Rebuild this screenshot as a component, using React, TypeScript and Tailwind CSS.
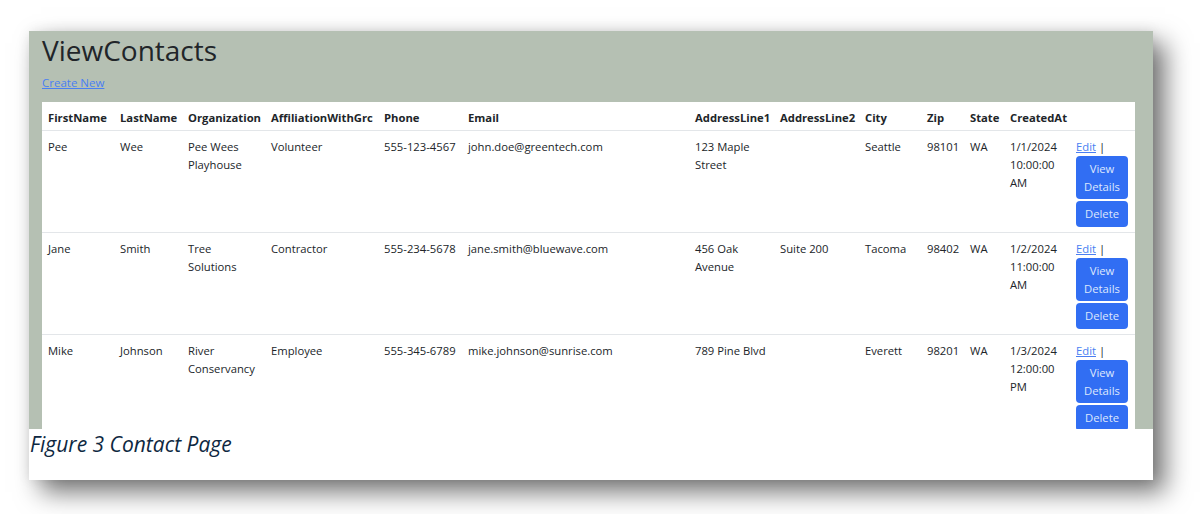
import React from 'react'

type Contact = {
  first: string
  last: string
  org: string
  affiliation: string
  phone: string
  email: string
  addr1: string
  addr2: string
  city: string
  zip: string
  state: string
  created: string
}

const contacts: Contact[] = [
  {
    first: 'Pee', last: 'Wee', org: 'Pee Wees Playhouse', affiliation: 'Volunteer',
    phone: '555-123-4567', email: 'john.doe@greentech.com', addr1: '123 Maple Street', addr2: '',
    city: 'Seattle', zip: '98101', state: 'WA', created: '1/1/2024 10:00:00 AM',
  },
  {
    first: 'Jane', last: 'Smith', org: 'Tree Solutions', affiliation: 'Contractor',
    phone: '555-234-5678', email: 'jane.smith@bluewave.com', addr1: '456 Oak Avenue', addr2: 'Suite 200',
    city: 'Tacoma', zip: '98402', state: 'WA', created: '1/2/2024 11:00:00 AM',
  },
  {
    first: 'Mike', last: 'Johnson', org: 'River Conservancy', affiliation: 'Employee',
    phone: '555-345-6789', email: 'mike.johnson@sunrise.com', addr1: '789 Pine Blvd', addr2: '',
    city: 'Everett', zip: '98201', state: 'WA', created: '1/3/2024 12:00:00 PM',
  },
]

const headers = [
  'FirstName', 'LastName', 'Organization', 'AffiliationWithGrc', 'Phone', 'Email',
  'AddressLine1', 'AddressLine2', 'City', 'Zip', 'State', 'CreatedAt', '',
]

const widths = [72, 68, 83, 113, 84, 227, 85, 85, 62, 43, 40, 66, 65]

export default function App() {
  return (
    <div className="min-h-screen bg-white pl-[29px] pt-[31px]" style={{ fontFamily: '"Open Sans", "Noto Sans", sans-serif' }}>
      <div className="w-[1124px] h-[449px] bg-white shadow-[12px_12px_24px_rgba(0,0,0,0.55),0_0_12px_rgba(0,0,0,0.08)]">
        <div className="h-[398px] overflow-hidden bg-[#b5c0b3] px-[13px] text-[#212529]">
          <h1 className="pt-[2px] text-[28px] leading-[34px] font-normal text-[#212529]">ViewContacts</h1>
          <a href="#" className="mt-[7px] inline-block text-[11.5px] leading-[18px] text-[#4a7ff2] underline">
            Create New
          </a>
          <table className="mt-[9px] w-[1093px] table-fixed border-collapse bg-white text-left text-[11.25px] leading-[18px]">
            <colgroup>
              {widths.map((w, i) => (
                <col key={i} style={{ width: w }} />
              ))}
            </colgroup>
            <thead>
              <tr className="border-b border-[#e3e6e9]">
                {headers.map((h, i) => (
                  <th key={i} className="overflow-hidden whitespace-nowrap px-[6px] pt-[7px] pb-[3px] font-bold">
                    {h}
                  </th>
                ))}
              </tr>
            </thead>
            <tbody>
              {contacts.map((c) => (
                <tr key={c.email} className="border-b border-[#e3e6e9] align-top">
                  <td className="px-[6px] pt-[7px] pb-[5px]">{c.first}</td>
                  <td className="px-[6px] pt-[7px]">{c.last}</td>
                  <td className="px-[6px] pt-[7px]">{c.org}</td>
                  <td className="px-[6px] pt-[7px]">{c.affiliation}</td>
                  <td className="px-[6px] pt-[7px]">{c.phone}</td>
                  <td className="px-[6px] pt-[7px]">{c.email}</td>
                  <td className="px-[6px] pt-[7px]">{c.addr1}</td>
                  <td className="px-[6px] pt-[7px]">{c.addr2}</td>
                  <td className="px-[6px] pt-[7px]">{c.city}</td>
                  <td className="px-[6px] pt-[7px]">{c.zip}</td>
                  <td className="px-[6px] pt-[7px]">{c.state}</td>
                  <td className="px-[6px] pt-[7px]">{c.created}</td>
                  <td className="px-[6px] pt-[7px] pb-[5px]">
                    <div>
                      <a href="#" className="text-[#4a7ff2] underline">Edit</a> |
                    </div>
                    <div className="flex flex-col gap-[2px]">
                      <button className="w-[52px] rounded-[4px] bg-[#316ef3] px-[6px] py-[3.5px] text-center text-[11.25px] leading-[18px] text-[#dfe8fd]">
                        View Details
                      </button>
                      <button className="w-[52px] rounded-[4px] bg-[#316ef3] px-[6px] py-[4px] text-center text-[11.25px] leading-[18px] text-[#dfe8fd]">
                        Delete
                      </button>
                    </div>
                  </td>
                </tr>
              ))}
            </tbody>
          </table>
        </div>
        <p className="pl-[1px] pt-[1px] text-[21px] leading-[28px] italic text-[#0e2841]">Figure 3 Contact Page</p>
      </div>
    </div>
  )
}
